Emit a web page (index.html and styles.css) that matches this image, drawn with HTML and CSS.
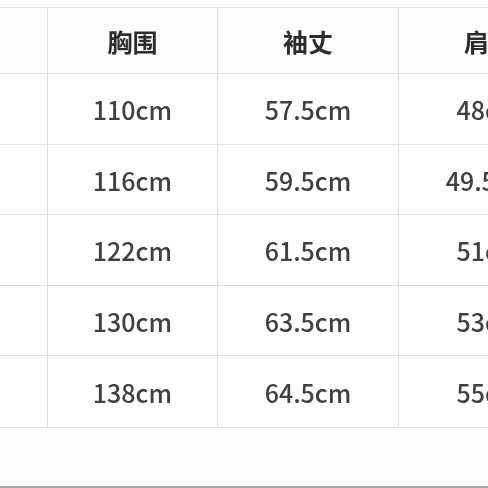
FILE: index.html
```html
<!DOCTYPE html>
<html lang="zh-CN">
<head>
<meta charset="utf-8">
<title>尺码表</title>
<link rel="stylesheet" href="styles.css">
</head>
<body>
<div class="page">
  <div class="viewport">
    <div class="size-table">
      <div class="cell head"></div>
      <div class="cell head">胸围</div>
      <div class="cell head">袖丈</div>
      <div class="cell head">肩宽</div>

      <div class="cell"></div>
      <div class="cell">110cm</div>
      <div class="cell">57.5cm</div>
      <div class="cell">48cm</div>

      <div class="cell"></div>
      <div class="cell">116cm</div>
      <div class="cell">59.5cm</div>
      <div class="cell">49.5cm</div>

      <div class="cell"></div>
      <div class="cell">122cm</div>
      <div class="cell">61.5cm</div>
      <div class="cell">51cm</div>

      <div class="cell"></div>
      <div class="cell">130cm</div>
      <div class="cell">63.5cm</div>
      <div class="cell">53cm</div>

      <div class="cell"></div>
      <div class="cell">138cm</div>
      <div class="cell">64.5cm</div>
      <div class="cell">55cm</div>
    </div>
  </div>
  <div class="bottom-rule"></div>
</div>
</body>
</html>
```

FILE: styles.css
```css
html, body {
  margin: 0;
  padding: 0;
  background: #ffffff;
}

.page {
  width: 488px;
  height: 488px;
  overflow: hidden;
  display: flex;
  flex-direction: column;
  background: #fdfdfd;
}

.viewport {
  width: 488px;
  overflow: hidden;
  padding-top: 7px;
}

.size-table {
  margin-left: -122px;
  width: 702px;
  display: grid;
  grid-template-columns: 170px 170px 181px 181px;
  grid-template-rows: 66px 71px 70px 71px 70px 72px;
  border-top: 1px solid #e2e2e2;
  font-family: "Noto Sans CJK SC", "Noto Sans", sans-serif;
  filter: blur(0.45px);
}

.cell {
  box-sizing: border-box;
  border-right: 1px solid #dcdcdc;
  border-bottom: 1px solid #e0e0e0;
  display: flex;
  align-items: center;
  justify-content: center;
  font-size: 25px;
  font-weight: 500;
  color: #404040;
  background: #ffffff;
  white-space: nowrap;
}

.cell.head {
  font-size: 25px;
  font-weight: 700;
  color: #2c2c2c;
  background: #fbfbfb;
}

.bottom-rule {
  margin-top: auto;
  height: 2px;
  background: #a9a9a9;
}
```
